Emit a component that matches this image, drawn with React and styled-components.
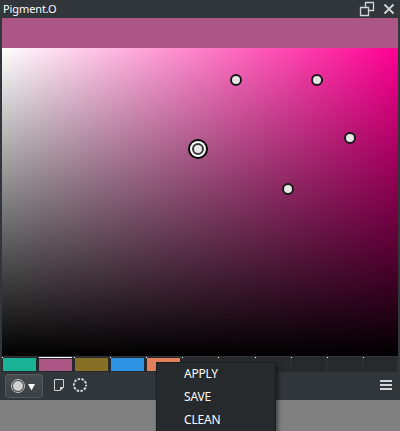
import React from "react";
import styled, { createGlobalStyle } from "styled-components";

const Global = createGlobalStyle`
  * { box-sizing: border-box; }
  body { margin: 0; background: #808080; overflow: hidden; }
`;

const Page = styled.div`
  position: relative;
  height: 431px;
  overflow: hidden;
  background: #808080;
  font: 12px/16px "Noto Sans", sans-serif;
  color: #fcfcfc;
`;

const Docker = styled.section`
  display: flex;
  flex-direction: column;
  height: 400px;
  padding: 0 2px;
  background: #31363b;
`;

const TitleBar = styled.header`
  display: flex;
  justify-content: space-between;
  height: 18px;
  padding-left: 1px;
`;

const Title = styled.span`
  font-size: 11px;
  line-height: 18px;
  letter-spacing: -0.1px;
`;

const WindowIcons = styled.svg`
  display: block;
  width: 40px;
  height: 18px;
`;

const CurrentColor = styled.div`
  height: 30px;
  background: #ab5685;
`;

const ColorField = styled.div`
  position: relative;
  height: 308px;
  background: linear-gradient(to bottom, transparent, #000),
    linear-gradient(to right, #fff, #ff0092);
`;

const Pin = styled.i`
  position: absolute;
  left: ${(p) => p.$x}px;
  top: ${(p) => p.$y}px;
  width: 12px;
  height: 12px;
  border: 2px solid #191919;
  border-radius: 50%;
  background: #e6e6e6;
  transform: translate(-50%, -50%);
`;

const ActivePin = styled(Pin)`
  border-color: #373737;
  box-shadow: 0 0 0 2px #fff, 0 0 0 4px #000;
`;

const Palette = styled.div`
  display: grid;
  grid-template-columns: repeat(6, 36px) 37px repeat(3, 36px) 35px;
  height: 16px;
  padding-top: 1px;
`;

const Slot = styled.div`
  position: relative;
  height: 15px;
  padding: ${(p) => (p.$active ? 2 : 1)}px 2px 1px 1px;
  background: #262a2d;
  border-right: 1px solid #31363b;
  ${(p) => p.$color && "padding-right: 1px; border-right-color: #262a2d;"}

  &::before {
    content: "";
    position: absolute;
    top: 0;
    left: ${(p) => (p.$active ? 1 : 0)}px;
    width: ${(p) => (p.$active ? 33 : 1)}px;
    height: 1px;
    background: #fff;
  }
`;

const Swatch = styled.div`
  width: 33px;
  height: 100%;
  background: ${(p) => p.$color};
`;

const ToolBar = styled.footer`
  display: flex;
  align-items: flex-start;
  height: 28px;
  padding: 2px 5px 0 3px;
`;

const ModeButton = styled.button`
  width: 38px;
  height: 24px;
  padding: 0;
  border: 1px solid #565b60;
  border-radius: 3px;
  background: linear-gradient(#464b50, #3b4045);
`;

const ToolIcon = styled.svg`
  display: block;
  width: ${(p) => p.$w}px;
  height: ${(p) => p.$h || 23}px;
  margin-left: ${(p) => p.$gap || 0}px;
`;

const MenuIcon = styled(ToolIcon)`
  margin-left: auto;
`;

const ContextMenu = styled.nav`
  position: absolute;
  left: 156px;
  top: 362px;
  width: 120px;
  height: 80px;
  border: 1px solid #1b1e20;
  background: #262a2d;
  box-shadow: 2px 4px 4px rgba(0, 0, 0, 0.5);
`;

const MenuItem = styled.div`
  height: 23px;
  padding-left: 27px;
  line-height: 21px;
  letter-spacing: -0.2px;
`;

const colors = ["#1ab395", "#ab5685", "#877026", "#2f94e3", "#e3815d"];
const slots = Array.from({ length: 11 }, (_, i) => colors[i]);
const pins = [[234, 32], [315, 32], [348, 90], [286, 141]];

export default function App() {
  return (
    <Page>
      <Global />
      <Docker>
        <TitleBar>
          <Title>Pigment.O</Title>
          <WindowIcons viewBox="358 0 40 18">
            <path d="M365.5 7.5V2.5H373.5V10.5H368.5M360.5 7.5H368.5V15.5H360.5Z" fill="none" stroke="#d3d4d5" strokeWidth="1.3" />
            <path d="M384.5 4.5L393.5 13.5M393.5 4.5L384.5 13.5" stroke="#d3d4d5" strokeWidth="1.8" />
          </WindowIcons>
        </TitleBar>
        <CurrentColor />
        <ColorField>
          {pins.map(([x, y]) => (
            <Pin key={`${x}-${y}`} $x={x} $y={y} />
          ))}
          <ActivePin $x={196} $y={101} />
        </ColorField>
        <Palette>
          {slots.map((color, i) => (
            <Slot key={i} $color={color} $active={i === 1}>
              {color && <Swatch $color={color} />}
            </Slot>
          ))}
        </Palette>
        <ToolBar>
          <ModeButton aria-label="Mode">
            <ToolIcon $w={36} $h={22} viewBox="6 375 36 22">
              <circle cx="18" cy="386" r="6.5" fill="none" stroke="#c4c6c8" />
              <circle cx="18" cy="386" r="5" fill="#d2d2d2" />
              <path d="M28 384H35L31.5 390.5Z" fill="#fcfcfc" />
            </ToolIcon>
          </ModeButton>
          <ToolIcon $w={14} $gap={9} viewBox="52 374 14 23">
            <path d="M54.5 379.5H63.5V387.5L60 390.5H54.5Z" fill="none" stroke="#d3d4d5" />
            <path d="M60 387H63.5L60 390.5Z" fill="#d3d4d5" />
          </ToolIcon>
          <ToolIcon $w={18} $gap={5} viewBox="71 374 18 23">
            <circle cx="80" cy="385" r="6.1" fill="none" stroke="#d3d4d5" strokeWidth="2" strokeDasharray="2.5 1.333" strokeDashoffset="1.25" />
          </ToolIcon>
          <MenuIcon $w={13} viewBox="380 374 13 23">
            <path d="M380 381H392M380 385H392M380 389H392" stroke="#d3d4d5" strokeWidth="2" />
          </MenuIcon>
        </ToolBar>
      </Docker>
      <ContextMenu>
        <MenuItem>APPLY</MenuItem>
        <MenuItem>SAVE</MenuItem>
        <MenuItem>CLEAN</MenuItem>
      </ContextMenu>
    </Page>
  );
}
